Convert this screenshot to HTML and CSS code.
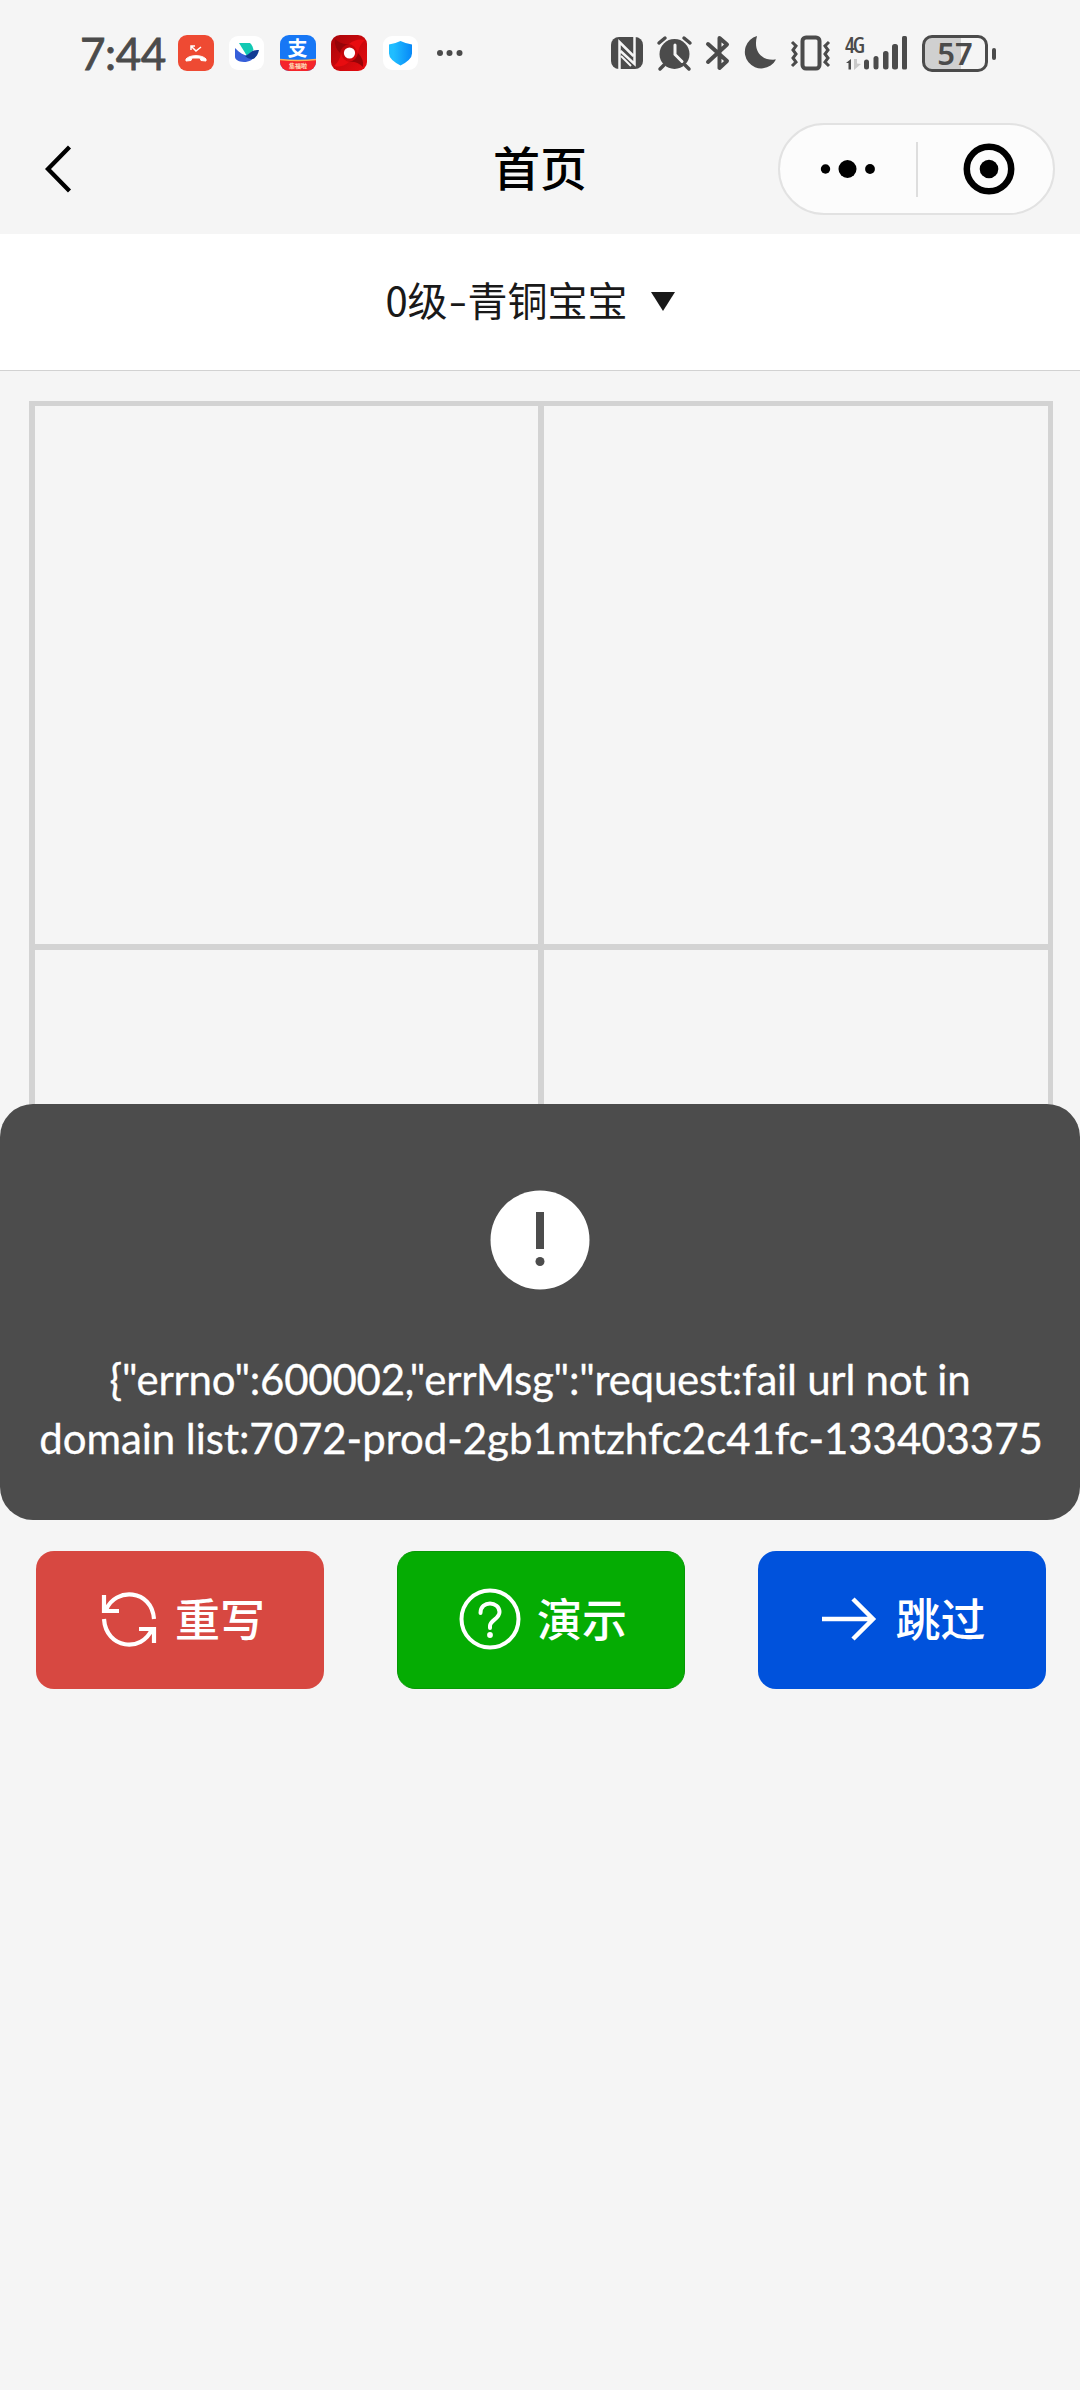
FILE: index.html
```html
<!DOCTYPE html>
<html lang="zh-CN">
<head>
<meta charset="utf-8">
<title>首页</title>
<link rel="stylesheet" href="styles.css">
</head>
<body>
<div class="statusbar">
  <div class="status-left">
    <span class="clock">7:44</span>
    <svg width="36" height="36" viewBox="0 0 36 36"><rect width="36" height="36" rx="9" fill="#ee4a33"/><path d="M8 26v-2c4-4.500 16-4.500 20 0v2l-5-.5-1-2.500h-8l-1 2.500z" fill="#fff" stroke="#fff" stroke-linejoin="round"/><path d="M13 15v-4h4M13.500 11.500l4.500 4.500L23 12" fill="none" stroke="#fff" stroke-width="1.500"/></svg>
    <svg width="36" height="36" viewBox="0 0 36 36"><rect y="1" width="35" height="34" rx="9" fill="#fff"/><path d="M10 8h11c2 2 3 4 3.500 7l-6.500 6z" fill="#12c9b3"/><path d="M6 13c7 8 15 10 21 5-2 7-7 9-12 9-6 0-9-3-9-5z" fill="#365fd9"/><path d="M16 21c4-1 6-7 14-6-1 5-4 9-7 9-3 0-5-1-7-3z" fill="#103b94"/></svg>
    <svg width="36" height="36" viewBox="0 0 36 36"><clipPath id="pay"><rect width="36" height="36" rx="9"/></clipPath><g clip-path="url(#pay)"><rect width="36" height="36" fill="#1777f5"/><path d="M0 24.500q18 2 36 0V36H0z" fill="#f5252b"/><path d="M0 24.500q18 2 36 0" fill="none" stroke="#ffb056" stroke-width="1.400"/></g><text class="pay-mark" x="17.500" y="21">支</text><text class="pay-tag" x="18" y="32.500">集福啦</text></svg>
    <svg width="36" height="36" viewBox="0 0 36 36"><linearGradient id="rd" x2="1" y2="1"><stop stop-color="#a80509"/><stop offset=".5" stop-color="#c8080c"/><stop offset="1" stop-color="#e80c10"/></linearGradient><rect width="36" height="36" rx="9" fill="url(#rd)"/><path d="M18 9Q25 3 34 5 28 10 27 18 24 10 18 9zM18 27Q11 33 3 31q6-5 7-13 2 8 8 9z" fill="#e80c10"/><path d="M9 18Q3 12 4 4q6 6 14 5-8 2-9 9zM27 18q6 6 5 14-6-6-14-5 8-2 9-9z" fill="#960408"/><circle cx="18.500" cy="18" r="5.600" fill="#fff"/></svg>
    <svg width="36" height="36" viewBox="0 0 36 36"><linearGradient id="sh"><stop offset=".2" stop-color="#20bdff"/><stop offset="1" stop-color="#0788f7"/></linearGradient><rect x="1" y="1" width="35" height="34" rx="9" fill="#fff"/><path d="M18.500 6q5 2.500 11.500 3.500v9q0 6-11.500 12-11.500-6-11.500-12v-9Q13.500 8.500 18.500 6z" fill="url(#sh)"/></svg>
    <svg class="more" width="28" height="8" viewBox="0 0 28 8" fill="#4b4b4b"><circle cx="4" cy="4" r="3"/><circle cx="13.500" cy="4" r="3"/><circle cx="23.500" cy="4" r="3"/></svg>
  </div>
  <div class="status-right">
    <svg width="32" height="34" viewBox="0 0 32 34"><rect y="1" width="32" height="32" rx="8" fill="#4b4b4b"/><path d="M8.500 33V6l14 14M23.500 0v28l-14-13" fill="none" stroke="#f5f5f5" stroke-width="2.500"/><path d="M10 20l10 10" stroke="#f5f5f5" stroke-width="2"/></svg>
    <svg width="35" height="36" viewBox="0 0 35 36"><circle cx="17.500" cy="19" r="15" fill="#4b4b4b"/><path d="M2 8l6-5M33 8l-6-5M7 30l-4 4M28 30l4 4" stroke="#4b4b4b" stroke-width="3.500" stroke-linecap="round"/><path d="M18 10v9.500l7 7" fill="none" stroke="#f5f5f5" stroke-width="3" stroke-linecap="round"/></svg>
    <svg width="24" height="36" viewBox="0 0 24 36"><path d="M2 9l19 17-7.500 7V3L21 9.500 2 27" fill="none" stroke="#4b4b4b" stroke-width="4" stroke-linejoin="round" stroke-linecap="round"/></svg>
    <svg width="32" height="36" viewBox="0 0 32 36"><path d="M13 1C9 16 17 26 32 24.500A16.500 16.500 0 1 1 13 1z" fill="#4b4b4b"/></svg>
    <svg width="41" height="36" viewBox="0 0 41 36" fill="none" stroke="#4b4b4b"><rect x="12.500" y="2.500" width="17" height="31" rx="3.500" stroke-width="4"/><path d="M2 7l4 4-3 4 3 4-3 4 3 4-4 4M39 7l-4 4 3 4-3 4 3 4-3 4 4 4" stroke-width="3"/></svg>
    <svg width="63" height="36" viewBox="0 0 63 36"><text class="net" x="0" y="18">4G</text><g fill="#4b4b4b"><rect x="19" y="24.500" width="5" height="10" rx="2.500"/><rect x="28.500" y="21" width="5" height="13.500" rx="2.500"/><rect x="38" y="16" width="5.500" height="18.500" rx="2.500"/><rect x="47" y="9" width="6" height="25.500" rx="2.500"/><rect x="57" y="1" width="5" height="33.500" rx="1.500"/><path d="M6 24v10.500H3.500V28H1z"/></g><path d="M9 24v11l7-6-4-.5V24z" fill="#c9c9c9"/></svg>
    <div class="battery"><span>57</span></div>
  </div>
</div>
<div class="navbar">
  <svg width="28" height="48" viewBox="0 0 28 48"><path d="M25.500 2L4 24l21.500 22" fill="none" stroke="#000" stroke-width="4.300"/></svg>
  <h1>首页</h1>
  <div class="capsule">
    <svg width="56" height="20" viewBox="0 0 56 20"><circle cx="5.500" cy="10" r="4.700"/><circle cx="27.500" cy="10" r="9"/><circle cx="50" cy="10" r="4.900"/></svg>
    <i></i>
    <svg width="52" height="52" viewBox="0 0 52 52"><circle cx="26" cy="26" r="22.200" fill="none" stroke="#000" stroke-width="6.500"/><circle cx="26" cy="26" r="9.300"/></svg>
  </div>
</div>
<div class="level"><span>0级<b>-</b>青铜宝宝</span><i class="caret"></i></div>
<div class="board"><div></div><div></div><div></div><div></div></div>
<div class="actions">
  <button class="btn red"><svg width="56" height="58" viewBox="0 0 56 58" fill="none" stroke="#fff" stroke-width="4.200"><path d="M5 20C14-3 51-1 53 29M3 29c2 30 38 34 48 10M3 5v16h15M38 39h15v14"/></svg>重写</button>
  <button class="btn green"><svg width="62" height="62" viewBox="0 0 62 62"><circle cx="31" cy="31" r="28.500" fill="none" stroke="#fff" stroke-width="4"/><path d="M21.500 25c0-13 19-12 19-1 0 7-9.500 8-9.500 14v2" fill="none" stroke="#fff" stroke-width="4" stroke-linecap="round"/><circle cx="31" cy="47" r="2.900" fill="#fff"/></svg>演示</button>
  <button class="btn blue"><svg width="54" height="46" viewBox="0 0 54 46" fill="none" stroke="#fff" stroke-width="4.500"><path d="M0 23h50M31 3l20 20-20 20"/></svg>跳过</button>
</div>
<div class="toast">
  <svg width="100" height="100" viewBox="0 0 100 100"><circle cx="50" cy="50" r="49.500" fill="#fff"/><path d="M46 22h8v37h-8z" fill="#4c4c4c"/><circle cx="50" cy="71.500" r="4.500" fill="#4c4c4c"/></svg>
  <p><span class="l1">{"errno":600002,"errMsg":"request:fail url not in</span><span class="l2">domain list:7072-prod-2gb1mtzhfc2c41fc-133403375</span></p>
</div>
</body>
</html>
```
FILE: styles.css
```css
* { box-sizing: border-box; }
body { margin: 0; width: 1080px; height: 2390px; background: #f5f5f5; position: relative; overflow: hidden; font-family: Lato, "Noto Sans CJK SC", sans-serif; }
svg { display: block; flex: none; overflow: visible; }
.statusbar { height: 100px; padding: 6px 84px 0 80px; display: flex; justify-content: space-between; align-items: center; }
.status-left, .status-right { display: flex; align-items: center; }
.status-left { gap: 15px; }
.status-right { gap: 14px; }
.clock { width: 83px; font-family: Lato, sans-serif; font-size: 44px; color: #4b4b4b; line-height: 48px; white-space: nowrap; letter-spacing: -.4px; -webkit-text-stroke: .8px #4b4b4b; }
.more { margin-left: 3px; }
.pay-mark { font: 700 20px "Noto Sans CJK SC", sans-serif; fill: #fff; text-anchor: middle; }
.pay-tag { font: 700 6px "Noto Sans CJK SC", sans-serif; fill: #ffe7c0; text-anchor: middle; }
.net { font: 600 22px "Open Sans", sans-serif; font-stretch: 75%; fill: #4b4b4b; letter-spacing: -2px; }
.battery { position: relative; width: 66px; height: 37px; margin-right: 8px; border: 3px solid #4b4b4b; border-radius: 10px; background: linear-gradient(90deg, #d0d0d0 60%, #f5f5f5 60%); color: #4b4b4b; text-align: center; font: 600 31px/31px "Noto Sans", sans-serif; }
.battery::after { content: ""; position: absolute; right: -11px; top: 10px; width: 4px; height: 12px; border-radius: 2px; background: #4b4b4b; }
.navbar { height: 134px; padding: 4px 25px 0 44px; display: grid; grid-template-columns: 258px 1fr 277px; align-items: center; }
.navbar h1 { margin: -6px 0 0; font: 500 47px/60px "Noto Sans CJK SC", sans-serif; color: #000; text-align: center; }
.capsule { width: 277px; height: 92px; border: 2px solid #e2e2e2; border-radius: 46px; background: #fcfcfc; display: flex; align-items: center; padding: 0 38px 0 40px; }
.capsule i { width: 2px; height: 55px; margin: 0 45px 0 40px; background: #dedede; }
.level { height: 137px; background: #fff; border-bottom: 1px solid #d2d2d2; display: flex; align-items: center; justify-content: center; gap: 23px; padding: 0 20px 6px 0; font-family: "Noto Sans CJK SC", sans-serif; font-size: 40px; color: #191919; }
.level b { display: inline-block; width: 20px; text-align: center; font-weight: 400; transform: scaleX(1.35); }
.caret { margin-top: 4px; border: 12.5px solid transparent; border-top: 19px solid #191919; border-bottom: 0; }
.board { width: 1024px; height: 1098px; margin: 30px 0 0 29px; background: #d3d3d3; padding: 5px 5px 5px 6px; display: grid; grid-template-columns: 503px 504px; grid-template-rows: 538px 544px; gap: 6px; }
.board div { background: #f5f5f5; }
.actions { margin: 52px 34px 0 36px; height: 138px; display: flex; justify-content: space-between; }
.btn { width: 288px; height: 138px; border: 0; border-radius: 18px; padding: 0 0 4px 4px; color: #fff; font: 500 45px/60px "Noto Sans CJK SC", sans-serif; display: flex; align-items: center; justify-content: center; gap: 18px; }
.btn svg { position: relative; top: 1px; }
.red { background: #d74841; padding-left: 6px; }
.green { background: #05ac03; border: 1px solid #079806; gap: 16px; }
.blue { background: #0052dc; gap: 19px; }
.toast { position: absolute; left: 0; top: 1104px; width: 1080px; height: 416px; border-radius: 33px; background: #4c4c4c; color: #fff; padding-top: 86px; display: flex; flex-direction: column; align-items: center; }
.toast p { margin: 60px 0 0; font-size: 42px; line-height: 59px; text-align: center; -webkit-text-stroke: .3px #fff; }
.toast span { display: block; white-space: nowrap; }
.l1 { letter-spacing: -.23px; }
.l2 { letter-spacing: -.05px; padding-left: 2px; }
```
